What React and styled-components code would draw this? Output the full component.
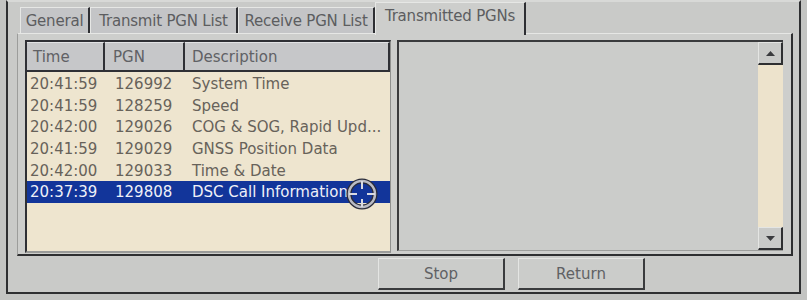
import React from "react";
import styled, { createGlobalStyle } from "styled-components";

const Global = createGlobalStyle`
  html, body { margin: 0; padding: 0; }
  body { background: #c3c4c2; font-family: "DejaVu Sans", "Liberation Sans", sans-serif; }
  * { box-sizing: border-box; }
`;

const Screen = styled.div`
  width: 807px;
  height: 300px;
  background: #c3c4c2;
  padding-left: 6px;
  overflow: hidden;
`;

const Window = styled.div`
  width: 795px;
  height: 294px;
  background: #c9cac8;
  border-left: 2px solid #2e2f31;
  border-right: 2px solid #2e2f31;
  border-bottom: 2px solid #2e2f31;
  border-top: 2px solid #d8d9d7;
  display: flex;
  flex-direction: column;
`;

const TabBar = styled.div`
  height: 31px;
  display: flex;
  align-items: flex-end;
  padding-left: 12px;
`;

const Tab = styled.div`
  width: ${(p) => p.$w}px;
  height: ${(p) => (p.$active ? 33 : 26)}px;
  margin-bottom: ${(p) => (p.$active ? -2 : 0)}px;
  background: ${(p) => (p.$active ? "#cdcecc" : "#c4c5c7")};
  border-top: 1px solid #e6e7e5;
  border-left: 1px solid #e6e7e5;
  border-right: 2px solid #2e2f33;
  display: flex;
  align-items: center;
  justify-content: center;
  padding-bottom: ${(p) => (p.$active ? 6 : 0)}px;
  font-size: 15px;
  letter-spacing: -0.2px;
  color: #5c5d60;
  white-space: nowrap;
  position: relative;
  z-index: ${(p) => (p.$active ? 2 : 1)};
`;

const Panel = styled.div`
  margin-left: 9px;
  width: 776px;
  height: 223px;
  background: #cdcecc;
  border-top: 1px solid #e6e7e5;
  border-left: 1px solid #9c9d9b;
  border-right: 2px solid #2e2f31;
  border-bottom: 2px solid #2e2f31;
  padding: 6px 8px 2px 7px;
  display: flex;
  gap: 6px;
`;

const ListBox = styled.div`
  width: 366px;
  height: 213px;
  border-top: 2px solid #2f3035;
  border-left: 2px solid #2f3035;
  border-right: 1px solid #8f908e;
  border-bottom: 2px solid #9a9b99;
  background: #eee5cf;
  position: relative;
  display: flex;
  flex-direction: column;
`;

const Header = styled.div`
  display: grid;
  grid-template-columns: 78px 80px 1fr;
  height: 30px;
  background: #c6c7c9;
  border-bottom: 2px solid #2f3035;
`;

const HeadCell = styled.div`
  border-right: 2px solid #2f3035;
  border-top: 1px solid #e2e3e5;
  padding-left: ${(p) => p.$pl}px;
  display: flex;
  align-items: center;
  font-size: 15px;
  color: #606165;
`;

const Rows = styled.div`
  padding-top: 1px;
  display: flex;
  flex-direction: column;
`;

const Row = styled.div`
  display: grid;
  grid-template-columns: 85px 77px 1fr;
  height: 21.7px;
  align-items: center;
  padding-left: 3px;
  font-size: 15px;
  white-space: nowrap;
  color: ${(p) => (p.$sel ? "#eef0f8" : "#67625a")};
  background: ${(p) => (p.$sel ? "#12359a" : "transparent")};
`;

const Cell = styled.span``;

const Cursor = styled.svg`
  position: absolute;
  left: 318px;
  top: 135px;
`;

const RightBox = styled.div`
  width: 387px;
  height: 211px;
  border-top: 2px solid #3a3b3d;
  border-left: 2px solid #3a3b3d;
  border-bottom: 1px solid #9d9e9c;
  background: #cbccca;
  display: flex;
  justify-content: flex-end;
`;

const ScrollBar = styled.div`
  width: 25px;
  display: flex;
  flex-direction: column;
  background: #ede3cc;
`;

const ScrollBtn = styled.div`
  height: 23px;
  background: #c9cac8;
  border-top: 1px solid #e4e5e3;
  border-left: 1px solid #e4e5e3;
  border-right: 2px solid #2e2f31;
  border-bottom: 2px solid #2e2f31;
  display: flex;
  align-items: center;
  justify-content: center;
`;

const Track = styled.div`
  flex: 1;
`;

const ButtonRow = styled.div`
  flex: 1;
  display: flex;
  gap: 13px;
  padding-left: 370px;
  padding-top: 2px;
`;

const Button = styled.div`
  width: 127px;
  height: 32px;
  background: #cbccca;
  border-top: 1px solid #e4e5e3;
  border-left: 1px solid #e4e5e3;
  border-right: 2px solid #3a3b3d;
  border-bottom: 2px solid #3a3b3d;
  display: flex;
  align-items: center;
  justify-content: center;
  font-size: 15px;
  color: #606164;
`;

const rows = [
  ["20:41:59", "126992", "System Time"],
  ["20:41:59", "128259", "Speed"],
  ["20:42:00", "129026", "COG & SOG, Rapid Upd..."],
  ["20:41:59", "129029", "GNSS Position Data"],
  ["20:42:00", "129033", "Time & Date"],
  ["20:37:39", "129808", "DSC Call Information"],
];

export default function App() {
  return (
    <>
      <Global />
      <Screen>
        <Window>
          <TabBar>
            <Tab $w={70}>General</Tab>
            <Tab $w={148}>Transmit PGN List</Tab>
            <Tab $w={137}>Receive PGN List</Tab>
            <Tab $w={151} $active>Transmitted PGNs</Tab>
          </TabBar>
          <Panel>
            <ListBox>
              <Header>
                <HeadCell $pl={6}>Time</HeadCell>
                <HeadCell $pl={8}>PGN</HeadCell>
                <HeadCell $pl={7}>Description</HeadCell>
              </Header>
              <Rows>
                {rows.map((r, i) => (
                  <Row key={i} $sel={i === 5}>
                    <Cell>{r[0]}</Cell>
                    <Cell>{r[1]}</Cell>
                    <Cell>{r[2]}</Cell>
                  </Row>
                ))}
              </Rows>
              <Cursor width="34" height="34" viewBox="0 0 34 34">
                <circle cx="17" cy="17" r="13" fill="none" stroke="#2a2c3a" strokeWidth="5" />
                <circle cx="17" cy="17" r="13" fill="none" stroke="#b9bbc4" strokeWidth="2.5" />
                <line x1="17" y1="4" x2="17" y2="12" stroke="#d8dae2" strokeWidth="2" />
                <line x1="17" y1="22" x2="17" y2="30" stroke="#d8dae2" strokeWidth="2" />
                <line x1="4" y1="17" x2="12" y2="17" stroke="#d8dae2" strokeWidth="2" />
                <line x1="22" y1="17" x2="30" y2="17" stroke="#d8dae2" strokeWidth="2" />
              </Cursor>
            </ListBox>
            <RightBox>
              <ScrollBar>
                <ScrollBtn>
                  <svg width="9" height="5" viewBox="0 0 9 5"><polygon points="0,5 9,5 4.5,0" fill="#3a3b3e" /></svg>
                </ScrollBtn>
                <Track />
                <ScrollBtn>
                  <svg width="9" height="5" viewBox="0 0 9 5"><polygon points="0,0 9,0 4.5,5" fill="#3a3b3e" /></svg>
                </ScrollBtn>
              </ScrollBar>
            </RightBox>
          </Panel>
          <ButtonRow>
            <Button>Stop</Button>
            <Button>Return</Button>
          </ButtonRow>
        </Window>
      </Screen>
    </>
  );
}
